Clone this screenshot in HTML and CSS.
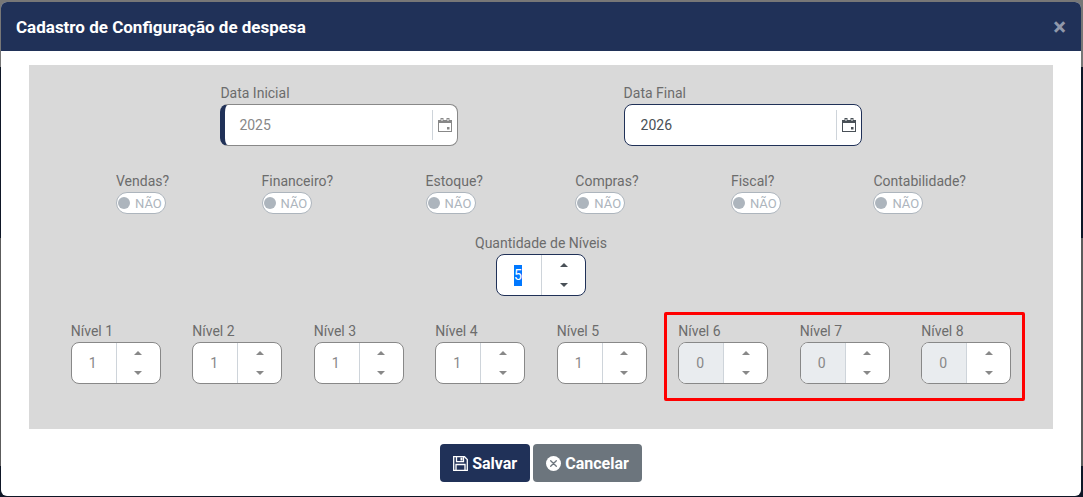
FILE: index.html
```html
<!DOCTYPE html>
<html lang="pt-BR">
<head>
    <meta charset="UTF-8">
    <meta name="viewport" content="width=device-width, initial-scale=1.0">
    <title>Cadastro de Configuração de despesa</title>
    <link rel="stylesheet" href="styles.css">
</head>
<body>
    <svg class="sprite" aria-hidden="true">
        <symbol id="calendar" viewBox="0 0 14 14">
            <path d="M0 2h14v12H0zM1 5v8h12V5z" fill-rule="evenodd"/>
            <path d="M2.500 0h3v3.500h-3zM8.500 0h3v3.500h-3z"/>
            <path d="M3.500 1h1v2h-1zM9.500 1h1v2h-1z" fill="#fff"/>
            <path d="M9 9h2.500v2.500H9z"/>
        </symbol>
        <symbol id="up" viewBox="0 0 8 4"><path d="M0 4L4 0l4 4z"/></symbol>
        <symbol id="down" viewBox="0 0 8 4"><path d="M0 0l4 4 4-4z"/></symbol>
    </svg>

    <div class="modal" role="dialog" aria-labelledby="modalTitle">
        <div class="modal-header">
            <h1 id="modalTitle">Cadastro de Configuração de despesa</h1>
            <button type="button" class="close" aria-label="Fechar">&times;</button>
        </div>
        <form class="modal-body">
            <div class="panel">
                <div class="row dates">
                    <div class="field">
                        <label for="dataInicial">Data Inicial</label>
                        <div class="date required">
                            <input type="text" id="dataInicial" value="2025" disabled>
                            <button type="button" aria-label="Abrir calendário" disabled><svg><use href="#calendar"/></svg></button>
                        </div>
                    </div>
                    <div class="field">
                        <label for="dataFinal">Data Final</label>
                        <div class="date active">
                            <input type="text" id="dataFinal" value="2026">
                            <button type="button" aria-label="Abrir calendário"><svg><use href="#calendar"/></svg></button>
                        </div>
                    </div>
                </div>

                <div class="row modules">
                    <div class="field">
                        <label for="vendas">Vendas?</label>
                        <label class="switch"><input type="checkbox" id="vendas"><span>NÃO</span></label>
                    </div>
                    <div class="field">
                        <label for="financeiro">Financeiro?</label>
                        <label class="switch"><input type="checkbox" id="financeiro"><span>NÃO</span></label>
                    </div>
                    <div class="field">
                        <label for="estoque">Estoque?</label>
                        <label class="switch"><input type="checkbox" id="estoque"><span>NÃO</span></label>
                    </div>
                    <div class="field">
                        <label for="compras">Compras?</label>
                        <label class="switch"><input type="checkbox" id="compras"><span>NÃO</span></label>
                    </div>
                    <div class="field">
                        <label for="fiscal">Fiscal?</label>
                        <label class="switch"><input type="checkbox" id="fiscal"><span>NÃO</span></label>
                    </div>
                    <div class="field">
                        <label for="contabilidade">Contabilidade?</label>
                        <label class="switch"><input type="checkbox" id="contabilidade"><span>NÃO</span></label>
                    </div>
                </div>

                <div class="row quantity">
                    <label for="quantidade">Quantidade de Níveis</label>
                    <div class="stepper active">
                        <input type="text" inputmode="numeric" id="quantidade" value="5">
                        <div class="arrows">
                            <button type="button" aria-label="Aumentar"><svg><use href="#up"/></svg></button>
                            <button type="button" aria-label="Diminuir"><svg><use href="#down"/></svg></button>
                        </div>
                    </div>
                </div>

                <div class="levels">
                    <div class="field">
                        <label for="nivel1">Nível 1</label>
                        <div class="stepper">
                            <input type="text" inputmode="numeric" id="nivel1" value="1">
                            <div class="arrows">
                                <button type="button" aria-label="Aumentar"><svg><use href="#up"/></svg></button>
                                <button type="button" aria-label="Diminuir"><svg><use href="#down"/></svg></button>
                            </div>
                        </div>
                    </div>
                    <div class="field">
                        <label for="nivel2">Nível 2</label>
                        <div class="stepper">
                            <input type="text" inputmode="numeric" id="nivel2" value="1">
                            <div class="arrows">
                                <button type="button" aria-label="Aumentar"><svg><use href="#up"/></svg></button>
                                <button type="button" aria-label="Diminuir"><svg><use href="#down"/></svg></button>
                            </div>
                        </div>
                    </div>
                    <div class="field">
                        <label for="nivel3">Nível 3</label>
                        <div class="stepper">
                            <input type="text" inputmode="numeric" id="nivel3" value="1">
                            <div class="arrows">
                                <button type="button" aria-label="Aumentar"><svg><use href="#up"/></svg></button>
                                <button type="button" aria-label="Diminuir"><svg><use href="#down"/></svg></button>
                            </div>
                        </div>
                    </div>
                    <div class="field">
                        <label for="nivel4">Nível 4</label>
                        <div class="stepper">
                            <input type="text" inputmode="numeric" id="nivel4" value="1">
                            <div class="arrows">
                                <button type="button" aria-label="Aumentar"><svg><use href="#up"/></svg></button>
                                <button type="button" aria-label="Diminuir"><svg><use href="#down"/></svg></button>
                            </div>
                        </div>
                    </div>
                    <div class="field">
                        <label for="nivel5">Nível 5</label>
                        <div class="stepper">
                            <input type="text" inputmode="numeric" id="nivel5" value="1">
                            <div class="arrows">
                                <button type="button" aria-label="Aumentar"><svg><use href="#up"/></svg></button>
                                <button type="button" aria-label="Diminuir"><svg><use href="#down"/></svg></button>
                            </div>
                        </div>
                    </div>
                    <div class="highlight">
                        <div class="field">
                            <label for="nivel6">Nível 6</label>
                            <div class="stepper">
                                <input type="text" id="nivel6" value="0" disabled>
                                <div class="arrows">
                                    <button type="button" aria-label="Aumentar" disabled><svg><use href="#up"/></svg></button>
                                    <button type="button" aria-label="Diminuir" disabled><svg><use href="#down"/></svg></button>
                                </div>
                            </div>
                        </div>
                        <div class="field">
                            <label for="nivel7">Nível 7</label>
                            <div class="stepper">
                                <input type="text" id="nivel7" value="0" disabled>
                                <div class="arrows">
                                    <button type="button" aria-label="Aumentar" disabled><svg><use href="#up"/></svg></button>
                                    <button type="button" aria-label="Diminuir" disabled><svg><use href="#down"/></svg></button>
                                </div>
                            </div>
                        </div>
                        <div class="field">
                            <label for="nivel8">Nível 8</label>
                            <div class="stepper">
                                <input type="text" id="nivel8" value="0" disabled>
                                <div class="arrows">
                                    <button type="button" aria-label="Aumentar" disabled><svg><use href="#up"/></svg></button>
                                    <button type="button" aria-label="Diminuir" disabled><svg><use href="#down"/></svg></button>
                                </div>
                            </div>
                        </div>
                    </div>
                </div>
            </div>

            <div class="modal-footer">
                <button type="button" class="btn btn-save">
                    <svg viewBox="0 0 15 15" fill="none" stroke="currentColor" stroke-width="1.300">
                        <path d="M.700.700h10.800l2.800 2.800v10.800H.700z"/>
                        <path d="M3.500.700v5h7v-5M3 14V8.500h9V14"/>
                        <path d="M8.500 1.500v3" stroke-width="2"/>
                    </svg>
                    Salvar
                </button>
                <button type="button" class="btn btn-cancel">
                    <svg viewBox="0 0 16 16">
                        <circle cx="8" cy="8" r="8" fill="currentColor"/>
                        <path d="M5 5l6 6M11 5l-6 6" stroke="#6c757d" stroke-width="1.400" stroke-linecap="round"/>
                    </svg>
                    Cancelar
                </button>
            </div>
        </form>
    </div>
    <script>
        var quantidade = document.getElementById('quantidade');
        quantidade.focus();
        quantidade.select();
    </script>
</body>
</html>
```
FILE: styles.css
```css
* {
    box-sizing: border-box;
}
body {
    margin: 0;
    padding: 2px 2px 1px 1px;
    font-family: Roboto, "Liberation Sans", sans-serif;
    font-size: 14px;
    line-height: 21px;
    color: #6c6c6c;
    background: linear-gradient(#777 67px, #0e1626 67px, #0e1626 238px, #5c5c5c 238px, #5c5c5c 466px, #0e1626 466px);
}
button,
input {
    font: inherit;
    margin: 0;
    padding: 0;
    border: none;
    border-radius: 0;
    background: none;
    color: inherit;
    outline: none;
}
button {
    cursor: pointer;
}
.sprite {
    display: none;
}
.modal {
    background: #fff;
    border-radius: 6px;
    overflow: hidden;
}
.modal-header {
    display: flex;
    justify-content: space-between;
    align-items: center;
    height: 49px;
    padding: 2px 15px 0;
    background: #203158;
    color: #fff;
}
.modal-header h1 {
    margin: 0;
    font-size: 17px;
    font-weight: 700;
}
.close {
    font-size: 24px;
    font-weight: 700;
    color: #9098ab;
}
.modal-body {
    padding: 14px 28px;
}
.panel {
    padding: 18px 26px 45px;
    background: #d9d9d9;
}
.row {
    display: flex;
    margin-bottom: 25px;
}
.field > label,
.quantity > label {
    display: block;
}

/* datas */
.dates {
    justify-content: center;
    gap: 17%;
}
.date {
    display: flex;
    align-items: center;
    width: 238px;
    height: 42px;
    border: 1px solid #888;
    border-radius: 8px;
    background: #fff;
    color: #888;
}
.date.required {
    border-left: 5px solid #203158;
}
.date.active {
    border-color: #203158;
    color: #495057;
}
.date input {
    flex: 1;
    min-width: 0;
    padding-left: 14px;
}
.date.active input {
    padding-left: 16px;
}
.date button {
    display: flex;
    justify-content: center;
    align-items: center;
    width: 25px;
    height: 30px;
    border-left: 1px solid #ced4da;
}
.date svg {
    width: 14px;
    height: 14px;
    fill: currentColor;
}

/* chaves sim / não */
.modules {
    justify-content: space-between;
    margin-bottom: 19px;
    padding: 0 61px;
}
.modules .switch {
    display: flex;
    align-items: center;
    gap: 5px;
    width: 50px;
    height: 22px;
    padding-left: 1px;
    border: 1px solid #adb5bd;
    border-radius: 11px;
    background: #fff;
    color: #adb5bd;
    font-size: 13px;
}
.switch input {
    appearance: none;
    width: 12px;
    height: 12px;
    border-radius: 50%;
    background: #adb5bd;
}

/* campos numéricos */
.quantity {
    flex-direction: column;
    align-items: center;
}
.stepper {
    display: flex;
    width: 90px;
    height: 42px;
    border: 1px solid #888;
    border-radius: 8px;
    overflow: hidden;
    background: #fff;
    color: #888;
}
.stepper.active {
    border-color: #203158;
    color: #495057;
}
.stepper input {
    width: 45px;
    padding-right: 2px;
    border-right: 1px solid #ced4da;
    text-align: center;
}
.stepper input:disabled {
    background: #e9ecef;
}
.stepper input::selection {
    background: #0078ff;
    color: #fff;
}
.arrows {
    flex: 1;
    display: flex;
    flex-direction: column;
}
.arrows button {
    flex: 1;
    display: flex;
    justify-content: center;
    align-items: center;
}
.arrows svg {
    width: 8px;
    height: 4px;
    fill: currentColor;
}
.levels {
    display: grid;
    grid-template-columns: repeat(8, 1fr);
}
.levels .field {
    width: 90px;
    justify-self: center;
}
.highlight {
    position: relative;
    grid-column: span 3;
    display: grid;
    grid-template-columns: repeat(3, 1fr);
}
.highlight::after {
    content: "";
    position: absolute;
    inset: -9px 2px -17px 1px;
    border: 3px solid #f00;
    border-radius: 2px;
    pointer-events: none;
}

/* botões */
.modal-footer {
    display: flex;
    justify-content: center;
    gap: 3px;
    padding-top: 15px;
}
.btn {
    display: flex;
    align-items: center;
    gap: 4px;
    height: 38px;
    padding: 0 13px;
    border-radius: 4px;
    color: #fff;
    font-size: 16px;
    font-weight: 700;
}
.btn svg {
    width: 15px;
    height: 15px;
}
.btn-save {
    background: #203158;
}
.btn-cancel {
    background: #6c757d;
}
```
